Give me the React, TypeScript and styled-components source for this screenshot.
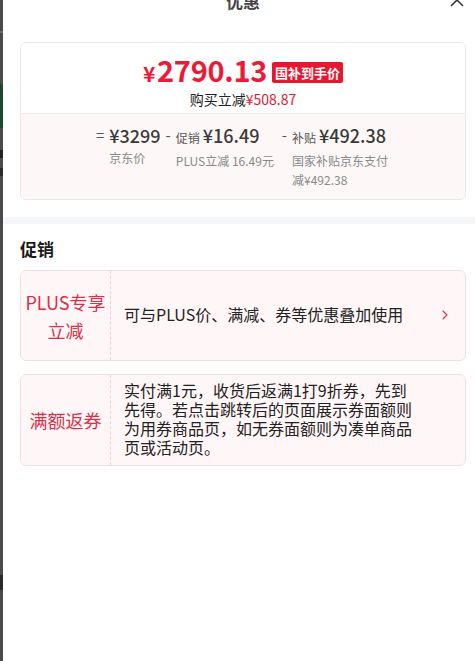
import React from 'react';
import styled, { createGlobalStyle } from 'styled-components';
import { ChevronRight } from 'lucide-react';

const GlobalStyle = createGlobalStyle`
  html, body {
    margin: 0;
    padding: 0;
    background: #ffffff;
    overflow: hidden;
  }
  body {
    font-family: 'Noto Sans CJK SC', 'Noto Sans', sans-serif;
    -webkit-font-smoothing: antialiased;
  }
`;

const Page = styled.div`
  width: 475px;
  height: 661px;
  display: flex;
  overflow: hidden;
`;

/* the darkened page peeking out behind the sheet */
const Backdrop = styled.div`
  width: 3px;
  flex-shrink: 0;
  background: linear-gradient(
    to bottom,
    #4a4a4a 0 31px,
    #6a6a6a 31px 33px,
    #4a4a4a 33px 84px,
    #1e4a2b 84px 128px,
    #4a4a4a 128px 150px,
    #222 150px 158px,
    #4a4a4a 158px 168px,
    #2a2a2a 168px 176px,
    #4a4a4a 176px 575px,
    #2a2a2a 575px 590px,
    #4a4a4a 590px
  );
`;

const Sheet = styled.div`
  width: 480px;
  flex-shrink: 0;
  background: #ffffff;
  display: flex;
  flex-direction: column;
`;

const Header = styled.div`
  height: 34px;
  margin-top: -17px;
  display: grid;
  grid-template-columns: 1fr auto 1fr;
  align-items: center;
`;

const Title = styled.div`
  grid-column: 2;
  font-size: 17px;
  font-weight: 700;
  color: #444;
`;

const Close = styled.div`
  grid-column: 3;
  justify-self: end;
  margin-right: 19px;
  width: 14px;
  height: 14px;
  display: flex;
`;

const Section = styled.div<{ $top?: number; $bottom?: number }>`
  padding: ${p => p.$top ?? 0}px 17px ${p => p.$bottom ?? 0}px;
  display: flex;
  flex-direction: column;
`;

const PriceCard = styled.div`
  border: 1px solid #f1e4e6;
  border-radius: 6px;
  overflow: hidden;
  display: flex;
  flex-direction: column;
`;

const PriceTop = styled.div`
  padding: 10px 0 5px;
  display: flex;
  flex-direction: column;
  align-items: center;
  background: #fff;
`;

const PriceRow = styled.div`
  height: 37px;
  display: flex;
  align-items: center;
  gap: 5px;
`;

const BigPrice = styled.div`
  color: #ec1a36;
  font-weight: 700;
  font-size: 29px;
  letter-spacing: -0.3px;
  line-height: 37px;
`;

const Yen = styled.span`
  font-size: 21px;
  margin-right: 2px;
`;

const Tag = styled.span`
  background: #e8172f;
  color: #fff;
  font-size: 13px;
  font-weight: 700;
  line-height: 21px;
  padding: 0 3px;
  border-radius: 2px;
  margin-top: 2px;
`;

const SaveLine = styled.div`
  font-size: 14px;
  line-height: 18px;
  color: #222;
`;

const Red = styled.span`
  color: #e8172f;
`;

const Breakdown = styled.div`
  background: #fdf7f7;
  border-top: 1px solid #f6ecec;
  padding: 10px 0 10px;
  display: flex;
  justify-content: center;
  gap: 5px;
`;

const Op = styled.div`
  font-size: 15px;
  line-height: 22px;
  color: #555;
`;

const Part = styled.div<{ $w?: number }>`
  display: flex;
  flex-direction: column;
  gap: 2px;
  width: ${p => (p.$w ? `${p.$w}px` : 'auto')};
`;

const Amount = styled.div`
  font-size: 18px;
  line-height: 22px;
  font-weight: 500;
  color: #3a3a3a;
  white-space: nowrap;
`;

const Label = styled.span`
  font-size: 12px;
  font-weight: 400;
  color: #555;
  margin-right: 3px;
`;

const Note = styled.div`
  font-size: 12px;
  line-height: 19px;
  color: #8a8a8a;
`;

const Band = styled.div`
  height: 7px;
  background: #f5f6fa;
`;

const SectionTitle = styled.div`
  font-size: 17px;
  font-weight: 700;
  line-height: 24px;
  color: #1a1a1a;
  margin-bottom: 9px;
`;

const PromoList = styled.div`
  display: flex;
  flex-direction: column;
  gap: 13px;
`;

const Promo = styled.div`
  min-height: 89px;
  border: 1px solid #f5dde1;
  border-radius: 6px;
  background: #fff6f7;
  display: flex;
`;

const PromoName = styled.div`
  width: 89px;
  flex-shrink: 0;
  border-right: 1px dashed #efd0d6;
  display: flex;
  align-items: center;
  justify-content: center;
  text-align: center;
  font-size: 18px;
  line-height: 28px;
  color: #d9304a;
`;

const PromoBody = styled.div`
  flex: 1;
  padding: 6px 12px 8px 13px;
  display: flex;
  align-items: center;
  gap: 8px;
`;

const PromoText = styled.div`
  width: 290px;
  font-size: 16px;
  line-height: 19px;
  color: #222;
`;

const Arrow = styled.div`
  margin-left: auto;
  display: flex;
  color: #d9304a;
`;

const promos = [
  { name: 'PLUS专享\n立减', text: '可与PLUS价、满减、券等优惠叠加使用', link: true },
  {
    name: '满额返券',
    text: '实付满1元，收货后返满1打9折券，先到先得。若点击跳转后的页面展示券面额则为用券商品页，如无券面额则为凑单商品页或活动页。',
    link: false,
  },
];

export default function App() {
  return (
    <Page>
      <GlobalStyle />
      <Backdrop />
      <Sheet>
        <Header>
          <Title>优惠</Title>
          <Close>
            <svg width="14" height="14" viewBox="0 0 14 14">
              <path d="M1 1L13 13M13 1L1 13" stroke="#333" strokeWidth="1.5" fill="none" />
            </svg>
          </Close>
        </Header>

        <Section $top={25} $bottom={17}>
          <PriceCard>
            <PriceTop>
              <PriceRow>
                <BigPrice>
                  <Yen>¥</Yen>2790.13
                </BigPrice>
                <Tag>国补到手价</Tag>
              </PriceRow>
              <SaveLine>
                购买立减<Red>¥508.87</Red>
              </SaveLine>
            </PriceTop>
            <Breakdown>
              <Op>=</Op>
              <Part>
                <Amount>¥3299</Amount>
                <Note>京东价</Note>
              </Part>
              <Op>-</Op>
              <Part $w={101}>
                <Amount>
                  <Label>促销</Label>¥16.49
                </Amount>
                <Note>PLUS立减 16.49元</Note>
              </Part>
              <Op>-</Op>
              <Part $w={98}>
                <Amount>
                  <Label>补贴</Label>¥492.38
                </Amount>
                <Note>国家补贴京东支付减¥492.38</Note>
              </Part>
            </Breakdown>
          </PriceCard>
        </Section>

        <Band />

        <Section $top={13}>
          <SectionTitle>促销</SectionTitle>
          <PromoList>
            {promos.map(p => (
              <Promo key={p.name}>
                <PromoName>
                  <div>
                    {p.name.split('\n').map(line => (
                      <div key={line}>{line}</div>
                    ))}
                  </div>
                </PromoName>
                <PromoBody>
                  <PromoText>{p.text}</PromoText>
                  {p.link && (
                    <Arrow>
                      <ChevronRight size={16} strokeWidth={1.6} />
                    </Arrow>
                  )}
                </PromoBody>
              </Promo>
            ))}
          </PromoList>
        </Section>
      </Sheet>
    </Page>
  );
}
